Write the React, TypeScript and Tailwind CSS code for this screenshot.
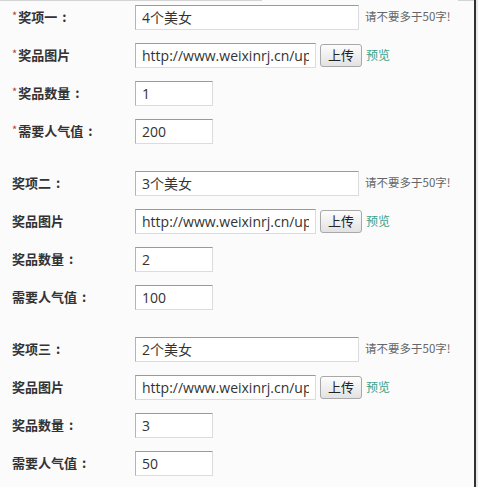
import React from "react"

const inputFont = { fontFamily: '"Open Sans", "Noto Sans CJK SC", sans-serif' }

interface Prize {
    title: string
    name: string
    count: string
    votes: string
    required?: boolean
}

const prizes: Prize[] = [
    { title: "奖项一", name: "4个美女", count: "1", votes: "200", required: true },
    { title: "奖项二", name: "3个美女", count: "2", votes: "100" },
    { title: "奖项三", name: "2个美女", count: "3", votes: "50" },
]

const inputCls =
    "h-[25px] border border-t-[#9a9a9a] border-l-[#b4b4b4] border-r-[#dcdcdc] border-b-[#dcdcdc] bg-white px-[6px] text-[14px] text-[#333] outline-none"

function Label({ text, colon, required }: { text: string; colon?: boolean; required?: boolean }) {
    return (
        <div className="flex w-[123px] shrink-0 items-center text-[13px] font-bold text-[#333]">
            {required && <span className="relative -top-[2px] mr-px text-[11px] font-normal text-[#c0392b]">*</span>}
            {text}
            {colon && <span className="ml-[5px]">:</span>}
        </div>
    )
}

function Row({ children }: { children: React.ReactNode }) {
    return <div className="flex h-[38px] items-center">{children}</div>
}

function PrizeBlock({ prize }: { prize: Prize }) {
    return (
        <div className="mb-[14px]">
            <Row>
                <Label text={prize.title} colon required={prize.required} />
                <input className={`${inputCls} w-[224px]`} defaultValue={prize.name} style={inputFont} />
                <span className="ml-[6px] text-[11.5px] text-[#666]">请不要多于50字!</span>
            </Row>
            <Row>
                <Label text="奖品图片" required={prize.required} />
                <input
                    className={`${inputCls} w-[181px]`}
                    defaultValue="http://www.weixinrj.cn/uploads/prize.jpg"
                    style={inputFont}
                />
                <button className="ml-[4px] h-[23px] w-[42px] rounded-[3px] border border-[#a8a8a8] bg-gradient-to-b from-[#fdfdfd] to-[#e2e2e2] text-[13px] text-[#222]">
                    上传
                </button>
                <span className="ml-[4px] text-[12px] text-[#3aa08c]">预览</span>
            </Row>
            <Row>
                <Label text="奖品数量" colon required={prize.required} />
                <input className={`${inputCls} w-[78px]`} defaultValue={prize.count} style={inputFont} />
            </Row>
            <Row>
                <Label text="需要人气值" colon required={prize.required} />
                <input className={`${inputCls} w-[78px]`} defaultValue={prize.votes} style={inputFont} />
            </Row>
        </div>
    )
}

export default function App() {
    return (
        <div
            className="flex h-[487px] w-[478px] overflow-hidden bg-[#fbfbfb]"
            style={{ fontFamily: '"Noto Sans CJK SC", "Liberation Sans", sans-serif' }}
        >
            <div className="flex-1">
                <div className="flex h-px">
                    <div className="w-[262px] bg-[#d4d4d4]" />
                    <div className="flex-1" />
                    <div className="w-[16px] bg-[#d4d4d4]" />
                </div>
                <div className="-mt-[3px] pl-[12px]">
                    {prizes.map((p) => (
                        <PrizeBlock key={p.title} prize={p} />
                    ))}
                </div>
            </div>
            <div className="w-[2px] bg-[#2e3332]" />
            <div className="w-[2px] bg-[#e8e8e8]" />
        </div>
    )
}
